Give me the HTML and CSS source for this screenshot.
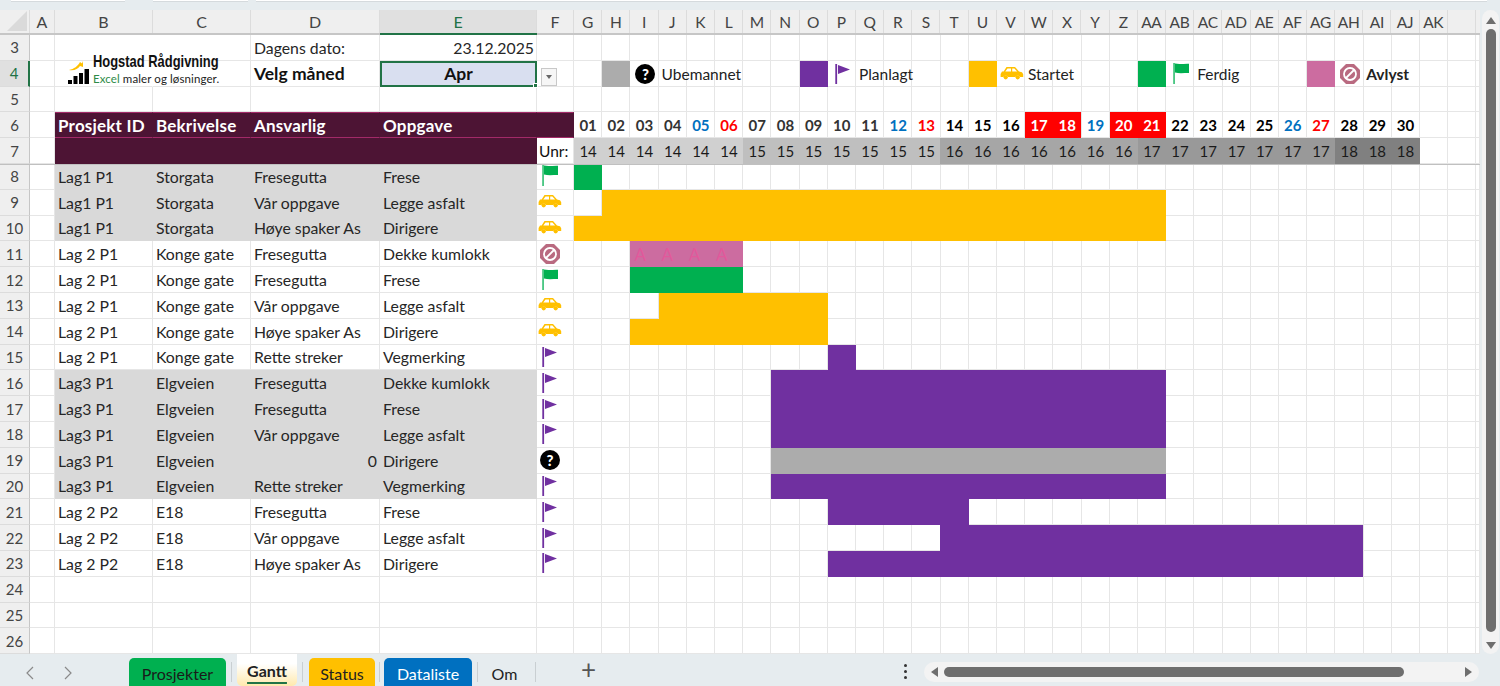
FILE: index.html
```html
<!DOCTYPE html>
<html lang="no">
<head>
<meta charset="utf-8">
<title>Gantt</title>
<link rel="stylesheet" href="styles.css">
</head>
<body>
<svg class="defs" aria-hidden="true">
  <symbol id="flag-g" viewBox="0 0 24 24"><rect x="4.4" y="1" width="1.3" height="21" fill="#00b050"/><path fill="#00b050" d="M6 1.5c4 1 9 0 14 .2V11c-5 0-10 .6-14-.4z"/></symbol>
  <symbol id="flag-p" viewBox="0 0 24 24"><rect x="4.3" y="2" width="1.8" height="20" fill="#7030a0"/><path fill="#7030a0" d="M7 3l12 4.6L7 12z"/></symbol>
  <symbol id="car" viewBox="0 0 24 24"><path fill="#ffc000" d="M6.5 5H15l4 4.4 3 .8 1.2 2V15H20a2.5 2.5 0 0 0-4.6 0H8A2.5 2.5 0 0 0 3.400 15H.6v-3l1.400-2.400 1.600-.2z"/><path fill="#fff" d="M7.500 6.400H11v3.100H5.300zM12.200 6.400h2.200l2.700 3.100h-4.900z"/><circle cx="5.700" cy="15.300" r="2.100" fill="#ffc000"/><circle cx="17.700" cy="15.300" r="2.100" fill="#ffc000"/></symbol>
  <symbol id="stop" viewBox="0 0 24 24"><path fill="#b96a80" d="M8 2h8l6 6v8l-6 6H8l-6-6V8z"/><circle cx="12" cy="12" r="6" fill="none" stroke="#fff" stroke-width="1.800"/><path stroke="#fff" stroke-width="1.800" d="M8 16l8-8"/></symbol>
</svg>

<div class="app">
  <div class="strip"><span class="field f1"></span><span class="field f2"></span><span class="field f3"></span></div>
  <div class="main">
    <div class="sheet">
      <div class="row colhead">
        <div class="corner"><span class="tri"></span></div>
        <div class="ch">A</div><div class="ch">B</div><div class="ch">C</div><div class="ch">D</div><div class="ch active">E</div><div class="ch">F</div>
        <div class="chdays">
          <div class="ch">G</div><div class="ch">H</div><div class="ch">I</div><div class="ch">J</div><div class="ch">K</div><div class="ch">L</div><div class="ch">M</div><div class="ch">N</div><div class="ch">O</div><div class="ch">P</div><div class="ch">Q</div><div class="ch">R</div><div class="ch">S</div><div class="ch">T</div><div class="ch">U</div><div class="ch">V</div><div class="ch">W</div><div class="ch">X</div><div class="ch">Y</div><div class="ch">Z</div><div class="ch">AA</div><div class="ch">AB</div><div class="ch">AC</div><div class="ch">AD</div><div class="ch">AE</div><div class="ch">AF</div><div class="ch">AG</div><div class="ch">AH</div><div class="ch">AI</div><div class="ch">AJ</div><div class="ch">AK</div><div class="ch"></div>
        </div>
      </div>

      <div class="row"><div class="rh">3</div><div class="c"></div><div class="c nr"></div><div class="c"></div><div class="c">Dagens dato:</div><div class="c right">23.12.2025</div><div class="c"></div><div class="days"></div></div>

      <div class="row"><div class="rh active">4</div><div class="c"></div><div class="c nr"></div><div class="c"></div><div class="c strong">Velg måned</div><div class="c selected">Apr<span class="handle"></span></div><div class="c ddcell"><span class="dd"><span class="ddtri"></span></span></div>
        <div class="days">
          <div class="bar grey" style="grid-column:2"></div><div class="ic" style="grid-column:3"><span class="help">?</span></div><div class="lbl" style="grid-column:4">Ubemannet</div>
          <div class="bar purple" style="grid-column:9"></div><div class="ic" style="grid-column:10"><svg class="icon"><use href="#flag-p"/></svg></div><div class="lbl" style="grid-column:11">Planlagt</div>
          <div class="bar yellow" style="grid-column:15"></div><div class="ic" style="grid-column:16"><svg class="icon"><use href="#car"/></svg></div><div class="lbl" style="grid-column:17">Startet</div>
          <div class="bar green" style="grid-column:21"></div><div class="ic" style="grid-column:22"><svg class="icon"><use href="#flag-g"/></svg></div><div class="lbl" style="grid-column:23">Ferdig</div>
          <div class="bar pink" style="grid-column:27"></div><div class="ic" style="grid-column:28"><svg class="icon"><use href="#stop"/></svg></div><div class="lbl strongl" style="grid-column:29">Avlyst</div>
        </div>
      </div>

      <div class="row"><div class="rh">5</div><div class="c"></div><div class="c"></div><div class="c"></div><div class="c"></div><div class="c"></div><div class="c"></div><div class="days"></div></div>

      <div class="row"><div class="rh">6</div><div class="c"></div><div class="c hd">Prosjekt ID</div><div class="c hd">Bekrivelse</div><div class="c hd">Ansvarlig</div><div class="c hd">Oppgave</div><div class="c hd"></div>
        <div class="days daynums">
          <span>01</span><span>02</span><span>03</span><span>04</span><span class="bl">05</span><span class="rd">06</span><span>07</span><span>08</span><span>09</span><span>10</span><span>11</span><span class="bl">12</span><span class="rd">13</span><span class="k">14</span><span class="k">15</span><span class="k">16</span><span class="hol">17</span><span class="hol">18</span><span class="bl">19</span><span class="hol">20</span><span class="hol">21</span><span class="k">22</span><span class="k">23</span><span class="k">24</span><span class="k">25</span><span class="bl">26</span><span class="rd">27</span><span class="k">28</span><span class="k">29</span><span class="k">30</span>
        </div>
      </div>

      <div class="row freeze"><div class="rh">7</div><div class="c"></div><div class="c hd2"></div><div class="c hd2"></div><div class="c hd2"></div><div class="c hd2"></div><div class="c unr">Unr:</div>
        <div class="days weeks">
          <span class="w1">14</span><span class="w1">14</span><span class="w1">14</span><span class="w1">14</span><span class="w1">14</span><span class="w1">14</span>
          <span class="w2">15</span><span class="w2">15</span><span class="w2">15</span><span class="w2">15</span><span class="w2">15</span><span class="w2">15</span><span class="w2">15</span>
          <span class="w3">16</span><span class="w3">16</span><span class="w3">16</span><span class="w3">16</span><span class="w3">16</span><span class="w3">16</span><span class="w3">16</span>
          <span class="w4">17</span><span class="w4">17</span><span class="w4">17</span><span class="w4">17</span><span class="w4">17</span><span class="w4">17</span><span class="w4">17</span>
          <span class="w5">18</span><span class="w5">18</span><span class="w5">18</span>
        </div>
      </div>

      <div class="row"><div class="rh">8</div><div class="c"></div><div class="c g">Lag1 P1</div><div class="c g">Storgata</div><div class="c g">Fresegutta</div><div class="c g">Frese</div><div class="c st"><svg class="icon"><use href="#flag-g"/></svg></div><div class="days"><div class="bar green" style="grid-column:1/2"></div></div></div>
      <div class="row"><div class="rh">9</div><div class="c"></div><div class="c g">Lag1 P1</div><div class="c g">Storgata</div><div class="c g">Vår oppgave</div><div class="c g">Legge asfalt</div><div class="c st"><svg class="icon"><use href="#car"/></svg></div><div class="days"><div class="bar yellow" style="grid-column:2/22"></div></div></div>
      <div class="row"><div class="rh">10</div><div class="c"></div><div class="c g">Lag1 P1</div><div class="c g">Storgata</div><div class="c g">Høye spaker As</div><div class="c g">Dirigere</div><div class="c st"><svg class="icon"><use href="#car"/></svg></div><div class="days"><div class="bar yellow" style="grid-column:1/22"></div></div></div>
      <div class="row"><div class="rh">11</div><div class="c"></div><div class="c">Lag 2 P1</div><div class="c">Konge gate</div><div class="c">Fresegutta</div><div class="c">Dekke kumlokk</div><div class="c st"><svg class="icon"><use href="#stop"/></svg></div><div class="days"><div class="bar pink letters" style="grid-column:3/7"><span>A</span><span>A</span><span>A</span><span>A</span></div></div></div>
      <div class="row"><div class="rh">12</div><div class="c"></div><div class="c">Lag 2 P1</div><div class="c">Konge gate</div><div class="c">Fresegutta</div><div class="c">Frese</div><div class="c st"><svg class="icon"><use href="#flag-g"/></svg></div><div class="days"><div class="bar green" style="grid-column:3/7"></div></div></div>
      <div class="row"><div class="rh">13</div><div class="c"></div><div class="c">Lag 2 P1</div><div class="c">Konge gate</div><div class="c">Vår oppgave</div><div class="c">Legge asfalt</div><div class="c st"><svg class="icon"><use href="#car"/></svg></div><div class="days"><div class="bar yellow" style="grid-column:4/10"></div></div></div>
      <div class="row"><div class="rh">14</div><div class="c"></div><div class="c">Lag 2 P1</div><div class="c">Konge gate</div><div class="c">Høye spaker As</div><div class="c">Dirigere</div><div class="c st"><svg class="icon"><use href="#car"/></svg></div><div class="days"><div class="bar yellow" style="grid-column:3/10"></div></div></div>
      <div class="row"><div class="rh">15</div><div class="c"></div><div class="c">Lag 2 P1</div><div class="c">Konge gate</div><div class="c">Rette streker</div><div class="c">Vegmerking</div><div class="c st"><svg class="icon"><use href="#flag-p"/></svg></div><div class="days"><div class="bar purple" style="grid-column:10/11"></div></div></div>
      <div class="row"><div class="rh">16</div><div class="c"></div><div class="c g">Lag3 P1</div><div class="c g">Elgveien</div><div class="c g">Fresegutta</div><div class="c g">Dekke kumlokk</div><div class="c st"><svg class="icon"><use href="#flag-p"/></svg></div><div class="days"><div class="bar purple" style="grid-column:8/22"></div></div></div>
      <div class="row"><div class="rh">17</div><div class="c"></div><div class="c g">Lag3 P1</div><div class="c g">Elgveien</div><div class="c g">Fresegutta</div><div class="c g">Frese</div><div class="c st"><svg class="icon"><use href="#flag-p"/></svg></div><div class="days"><div class="bar purple" style="grid-column:8/22"></div></div></div>
      <div class="row"><div class="rh">18</div><div class="c"></div><div class="c g">Lag3 P1</div><div class="c g">Elgveien</div><div class="c g">Vår oppgave</div><div class="c g">Legge asfalt</div><div class="c st"><svg class="icon"><use href="#flag-p"/></svg></div><div class="days"><div class="bar purple" style="grid-column:8/22"></div></div></div>
      <div class="row"><div class="rh">19</div><div class="c"></div><div class="c g">Lag3 P1</div><div class="c g">Elgveien</div><div class="c g right">0</div><div class="c g">Dirigere</div><div class="c st"><span class="help">?</span></div><div class="days"><div class="bar grey" style="grid-column:8/22"></div></div></div>
      <div class="row"><div class="rh">20</div><div class="c"></div><div class="c g">Lag3 P1</div><div class="c g">Elgveien</div><div class="c g">Rette streker</div><div class="c g">Vegmerking</div><div class="c st"><svg class="icon"><use href="#flag-p"/></svg></div><div class="days"><div class="bar purple" style="grid-column:8/22"></div></div></div>
      <div class="row"><div class="rh">21</div><div class="c"></div><div class="c">Lag 2 P2</div><div class="c">E18</div><div class="c">Fresegutta</div><div class="c">Frese</div><div class="c st"><svg class="icon"><use href="#flag-p"/></svg></div><div class="days"><div class="bar purple" style="grid-column:10/15"></div></div></div>
      <div class="row"><div class="rh">22</div><div class="c"></div><div class="c">Lag 2 P2</div><div class="c">E18</div><div class="c">Vår oppgave</div><div class="c">Legge asfalt</div><div class="c st"><svg class="icon"><use href="#flag-p"/></svg></div><div class="days"><div class="bar purple" style="grid-column:14/29"></div></div></div>
      <div class="row"><div class="rh">23</div><div class="c"></div><div class="c">Lag 2 P2</div><div class="c">E18</div><div class="c">Høye spaker As</div><div class="c">Dirigere</div><div class="c st"><svg class="icon"><use href="#flag-p"/></svg></div><div class="days"><div class="bar purple" style="grid-column:10/29"></div></div></div>
      <div class="row"><div class="rh">24</div><div class="c"></div><div class="c"></div><div class="c"></div><div class="c"></div><div class="c"></div><div class="c"></div><div class="days"></div></div>
      <div class="row"><div class="rh">25</div><div class="c"></div><div class="c"></div><div class="c"></div><div class="c"></div><div class="c"></div><div class="c"></div><div class="days"></div></div>
      <div class="row"><div class="rh">26</div><div class="c"></div><div class="c"></div><div class="c"></div><div class="c"></div><div class="c"></div><div class="c"></div><div class="days"></div></div>

      <div class="logo">
        <svg class="logomark" viewBox="0 0 22 24"><path fill="#ffc000" d="M1 9c5-1 9-4 11-8l2 1.500 1-2.500v6l-3-1C10 8 6 10 1 9z"/><rect x="0" y="19" width="4" height="4" fill="#000"/><rect x="5.500" y="15" width="4" height="8" fill="#000"/><rect x="11" y="12" width="4" height="11" fill="#000"/><rect x="16.500" y="8" width="4.500" height="15" fill="#000"/></svg>
        <div class="logotext"><div class="logoname">Hogstad Rådgivning</div><div class="logosub"><span class="xl">Excel</span> maler og løsninger.</div></div>
      </div>
    </div>

    <div class="vscroll"><span class="up"></span><span class="vthumb"></span><span class="down"></span></div>
  </div>

  <div class="tabs">
    <svg class="chev c1" viewBox="0 0 10 16"><path d="M8 2L2 8l6 6" fill="none" stroke="#8a8a8a" stroke-width="1.200"/></svg>
    <svg class="chev c2" viewBox="0 0 10 16"><path d="M2 2l6 6-6 6" fill="none" stroke="#8a8a8a" stroke-width="1.200"/></svg>
    <div class="tab t-green">Prosjekter</div><span class="sep"></span>
    <div class="tab t-active">Gantt</div><span class="sep sep-wide"></span>
    <div class="tab t-yellow">Status</div><span class="sep sep-tight"></span>
    <div class="tab t-blue">Dataliste</div><span class="sep"></span>
    <div class="tab t-plain">Om</div><span class="sep"></span>
    <span class="plus">+</span>
    <span class="dots"><i></i><i></i><i></i></span>
    <div class="hscroll"><span class="left"></span><span class="hthumb"></span><span class="rightarr"></span></div>
  </div>
</div>
</body>
</html>
```
FILE: styles.css
```css
* { box-sizing: border-box; }
html, body { margin: 0; padding: 0; height: 100%; overflow: hidden; }
body { font-family: Lato, "Open Sans", sans-serif; font-size: 15.8px; color: #222; background: #e6ecef; }
.defs { position: absolute; width: 0; height: 0; }
.app { width: 1500px; height: 686px; display: flex; flex-direction: column; }

.strip { height: 10px; display: flex; gap: 8px; padding-left: 11px; align-items: flex-start; }
.field { height: 2px; background: #fff; border-bottom: 1px solid #d5dadd; }
.f1 { width: 114px; }
.f2 { width: 95px; margin-left: 20px; }
.f3 { width: 1231px; }

.main { display: flex; height: 644px; }
.sheet { position: relative; width: 1480px; background: #fff; }
.row { display: grid; grid-template-columns: 30px 25px 98px 98px 129px 157px 37px 906px; height: 25.8px; }
.colhead { height: 25px; background: #efefef; border-bottom: 2px solid #c6c6c6; }
.corner { display: flex; align-items: flex-end; justify-content: flex-end; padding: 0 2px 2px 0; border-right: 1px solid #dcdcdc; }
.tri { width: 0; height: 0; border-left: 20px solid transparent; border-bottom: 20px solid #dadada; }
.ch { display: flex; align-items: center; justify-content: center; color: #444; font-size: 16px; border-right: 1px solid #dcdcdc; white-space: nowrap; }
.ch.active { background: #e0e0e0; color: #217346; box-shadow: 0 2px 0 #217346; }
.chdays { display: grid; grid-template-columns: repeat(32, 28.2px) 1fr; }
.chdays .ch { font-size: 15.5px; letter-spacing: -.3px; }

.rh { background: #efefef; border-right: 1px solid #c6c6c6; border-bottom: 1px solid #dcdcdc; display: flex; align-items: center; justify-content: center; color: #444; font-size: 15px; }
.rh.active { background: #e0e0e0; color: #217346; border-right: 2px solid #217346; }

.c { border-right: 1px solid #e6e6e6; border-bottom: 1px solid #e6e6e6; padding: 0 3px; display: flex; align-items: center; white-space: nowrap; min-width: 0; color: #262626; }
.c.nr { border-right-color: transparent; }
.right { justify-content: flex-end; padding-right: 2px; }
.strong { font-weight: 700; font-size: 17.500px; color: #111; }
.strongl { font-weight: 700; font-size: 16.500px; color: #111; }
.g { background: #d9d9d9; border-right-color: #d9d9d9; border-bottom-color: #d9d9d9; }
.hd { background: #4d1434; color: #fff; font-weight: 700; font-size: 17px; letter-spacing: .2px; border-top: 1px solid #a32a68; border-bottom: 1px solid #a32a68; border-right-color: #4d1434; }
.hd2 { background: #4d1434; border-right-color: #4d1434; border-bottom-color: #4d1434; }
.unr { color: #111; padding-left: 2px; font-size: 15.500px; }
.st { padding: 0 0 0 1px; overflow: visible; }
.selected { position: relative; background: #d9dff0; border: 2px solid #217346; justify-content: center; font-weight: 700; font-size: 17.500px; color: #111; }
.handle { position: absolute; right: -3px; bottom: -3px; background: #217346; border: 1px solid #fff; box-sizing: content-box; width: 3px; height: 3px; }
.ddcell { padding: 0 0 0 4px; align-items: flex-end; }
.dd { width: 16px; height: 18px; background: #f6f6f6; border: 1px solid #c8c8c8; display: flex; align-items: center; justify-content: center; }
.ddtri { width: 0; height: 0; border-left: 3.500px solid transparent; border-right: 3.500px solid transparent; border-top: 4px solid #666; }
.icon { width: 24px; height: 24px; display: block; flex: none; }
.help { width: 20px; height: 20px; margin-left: 2px; border-radius: 50%; background: #000; color: #fff; font-weight: 900; font-size: 15px; line-height: 20px; text-align: center; flex: none; }

.days {
  display: grid;
  grid-template-columns: repeat(32, 28.2px) 1fr;
  grid-template-rows: 1fr;
  background-image: repeating-linear-gradient(90deg, transparent 0 27.2px, #e6e6e6 27.2px 28.2px), linear-gradient(to top, #e6e6e6 1px, transparent 1px);
  background-size: 902.4px 100%, 100% 100%;
  background-repeat: no-repeat;
  border-right: 1px solid #e6e6e6;
}
.bar { grid-row: 1; min-width: 0; }
.ic { grid-row: 1; display: flex; align-items: center; padding-left: 3px; }
.lbl { grid-row: 1; display: flex; align-items: center; white-space: nowrap; padding-left: 3px; color: #222; font-size: 15.500px; }
.grey { background: #acacac; }
.purple { background: #7030a0; }
.yellow { background: #ffc000; }
.green { background: #00b050; }
.pink { background: #cc6ca0; }
.letters { display: grid; grid-template-columns: repeat(4, 1fr); align-items: center; color: #e2589b; font-size: 17px; padding-left: 4px; }

.daynums span { display: flex; align-items: center; justify-content: center; font-weight: 700; font-size: 15px; color: #333; }
.daynums .k { color: #000; }
.daynums .bl { color: #0070c0; }
.daynums .rd { color: #f00; }
.daynums .hol { background: #f00; color: #fff; }
.weeks span { display: flex; align-items: center; justify-content: center; color: #1a1a1a; font-size: 15px; }
.w1 { background: #d0d0d0; }
.w2 { background: #bfbfbf; }
.w3 { background: #a6a6a6; }
.w4 { background: #999; }
.w5 { background: #808080; }
.freeze { box-shadow: 0 1px 0 #c0c0c0; position: relative; }

.logo { position: absolute; left: 68px; top: 43px; display: flex; align-items: flex-end; gap: 3px; }
.logomark { width: 22px; height: 24px; display: block; margin-bottom: 1px; }
.logotext { display: flex; flex-direction: column; width: 130px; }
.logoname { font-family: "Liberation Sans", sans-serif; font-weight: 700; font-size: 17px; color: #111; line-height: 18px; white-space: nowrap; transform: scaleX(.76); transform-origin: left center; }
.logosub { font-size: 11.500px; line-height: 15px; color: #222; letter-spacing: .1px; white-space: nowrap; }
.xl { color: #2e8b47; }

.vscroll { width: 17px; height: 644px; margin-left: 2px; background: #f3f3f3; border-radius: 9px; display: flex; flex-direction: column; align-items: center; padding-top: 7px; }
.up { width: 0; height: 0; border-left: 5px solid transparent; border-right: 5px solid transparent; border-bottom: 7px solid #6e6e6e; }
.vthumb { width: 10px; height: 603px; margin: 5px 0; background: #6e6e6e; border-radius: 5px; }
.down { width: 0; height: 0; border-left: 5px solid transparent; border-right: 5px solid transparent; border-top: 7px solid #6e6e6e; margin-top: 5px; }

.tabs { position: relative; height: 32px; display: flex; align-items: flex-end; padding-left: 129px; color: #222; }
.chev { position: absolute; top: 11px; width: 10px; height: 16px; }
.c1 { left: 25px; }
.c2 { left: 63px; }
.tab { height: 28px; border-radius: 5px 5px 0 0; display: flex; align-items: center; justify-content: center; font-size: 16px; padding-top: 3px; }
.t-green { width: 97px; background: #00b050; color: #1a1a1a; }
.t-active { width: 60px; height: 32px; background: linear-gradient(#fff 30%, #ffe9ad); font-weight: 700; padding: 0; border-radius: 0 0 5px 5px; text-decoration: underline; text-decoration-color: #217346; text-decoration-thickness: 2px; text-underline-offset: 5px; }
.t-yellow { width: 66px; background: #ffc000; }
.t-blue { width: 88px; background: #0070c0; color: #fff; }
.t-plain { width: 47px; padding-right: 4px; }
.sep { width: 1px; height: 20px; background: #c9cfd2; margin: 0 5px 4px; }
.sep-wide { margin-right: 6px; }
.sep-tight { margin-right: 4px; margin-left: 4px; }
.plus { position: absolute; left: 581px; top: 1px; font-size: 26px; line-height: 28px; color: #555; }
.dots { position: absolute; left: 904px; top: 10px; display: flex; flex-direction: column; gap: 3px; }
.dots i { display: block; width: 3px; height: 3px; background: #333; border-radius: 50%; }
.hscroll { position: absolute; left: 924px; top: 8px; width: 555px; height: 20px; background: #f3f3f3; border-radius: 10px; display: flex; align-items: center; padding: 0 7px; }
.left { width: 0; height: 0; border-top: 5px solid transparent; border-bottom: 5px solid transparent; border-right: 7px solid #6e6e6e; }
.hthumb { width: 460px; height: 10px; margin-left: 6px; background: #6e6e6e; border-radius: 5px; }
.rightarr { width: 0; height: 0; border-top: 5px solid transparent; border-bottom: 5px solid transparent; border-left: 7px solid #6e6e6e; margin-left: auto; }
```
